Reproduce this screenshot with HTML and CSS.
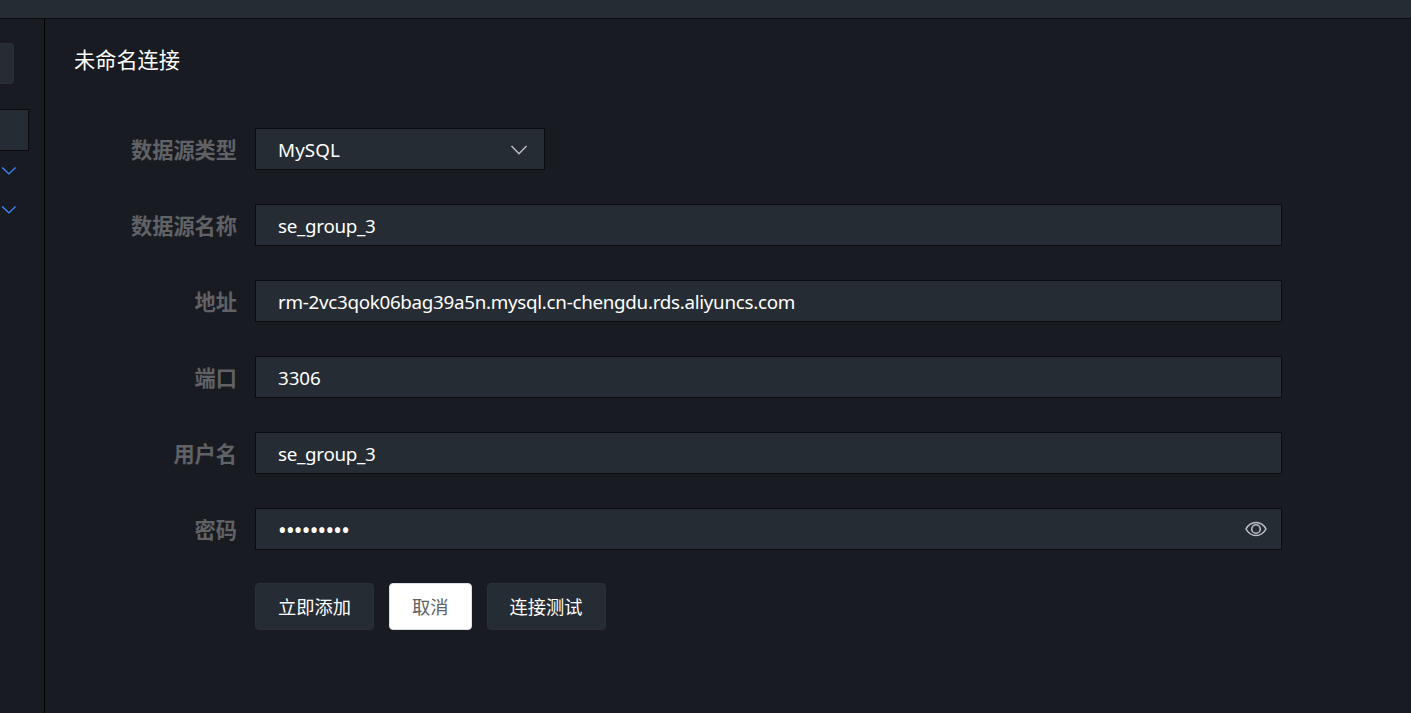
FILE: index.html
```html
<!DOCTYPE html>
<html lang="zh-CN">
<head>
<meta charset="utf-8">
<title>未命名连接</title>
<link rel="stylesheet" href="styles.css">
</head>
<body>
<div class="app">
  <header class="topbar"></header>
  <div class="body">
    <aside class="sidebar">
      <div class="side-button"></div>
      <div class="side-input"></div>
      <svg class="side-arrow" viewBox="0 0 16 10"><path d="M2.200 1.500 8.900 7.900 15.600 1.500"/></svg>
      <svg class="side-arrow" viewBox="0 0 16 10"><path d="M2.200 1.500 8.900 7.900 15.600 1.500"/></svg>
    </aside>
    <main class="main">
      <h1 class="title">未命名连接</h1>
      <form class="form">
        <div class="row"><label class="label">数据源类型</label>
          <div class="field select"><span class="value mysql">MySQL</span>
            <svg class="arrow" viewBox="0 0 18 12"><path d="M1.5 2 9 9.700 16.5 2"/></svg></div></div>
        <div class="row"><label class="label">数据源名称</label><div class="field"><span class="value">se_group_3</span></div></div>
        <div class="row"><label class="label">地址</label><div class="field"><span class="value">rm-2vc3qok06bag39a5n.mysql.cn-chengdu.rds.aliyuncs.com</span></div></div>
        <div class="row"><label class="label">端口</label><div class="field"><span class="value port">3306</span></div></div>
        <div class="row"><label class="label">用户名</label><div class="field"><span class="value">se_group_3</span></div></div>
        <div class="row"><label class="label">密码</label>
          <div class="field"><span class="value password">•••••••••</span>
            <svg class="eye" viewBox="0 0 22 16"><path d="M1 8C5.5-.6 16.5-.6 21 8 16.500 16.600 5.500 16.600 1 8Z"/><circle cx="11" cy="8" r="4.300"/></svg></div></div>
        <div class="actions">
          <button type="button" class="button">立即添加</button>
          <button type="button" class="button plain">取消</button>
          <button type="button" class="button">连接测试</button>
        </div>
      </form>
    </main>
  </div>
</div>
</body>
</html>
```
FILE: styles.css
```css
* { box-sizing: border-box; }
body {
  margin: 0;
  background: #181c22;
  color: #fff;
  font-family: "Noto Sans", "Noto Sans CJK SC", sans-serif;
}
.app { height: 713px; display: flex; flex-direction: column; overflow: hidden; }
.topbar { height: 19px; flex: none; background: #262c33; border-bottom: 1px solid #0a0c0f; }
.body { flex: 1; display: flex; }
.sidebar { width: 45px; flex: none; border-right: 1px solid #000; padding-top: 24px; }
.side-button {
  width: 14px; height: 41px;
  background: #262c33;
  border: 1px solid #2c3036; border-left: 0;
  border-radius: 0 4px 4px 0;
}
.side-input {
  width: 29px; height: 42px; margin-top: 25px;
  background: #262c33;
  border: 1px solid #0a0c0f; border-left: 0;
}
.side-arrow { display: block; width: 16px; height: 10px; margin: 15px 0 29px; fill: none; stroke: #3a8bff; stroke-width: 1.4; }
.main { flex: 1; padding: 25px 129px 0 29px; }
.title { margin: 0; font-family: "Noto Sans CJK SC", sans-serif; font-size: 21.2px; font-weight: 400; line-height: 30px; }
.form { margin-top: 54px; }
.row { display: flex; height: 42px; margin-bottom: 34px; }
.label {
  width: 181px; padding-right: 18px; flex: none;
  text-align: right; white-space: nowrap;
  font-family: "Noto Sans CJK SC", sans-serif;
  font-size: 21.2px; font-weight: 700; line-height: 42px;
  color: #606266;
}
.field {
  flex: 1; display: flex; align-items: center; justify-content: space-between;
  padding: 1px 14px 0 22px;
  background: #262c33;
  border: 1px solid #0a0c0f;
}
.select { flex: none; width: 290px; padding-right: 16px; }
.value { font-size: 18.8px; line-height: 38px; white-space: nowrap; letter-spacing: -0.29px; }
.mysql { letter-spacing: 0.1px; }
.port { letter-spacing: -0.1px; }
.password { font-size: 23px; letter-spacing: -0.74px; }
.arrow { width: 18px; height: 12px; fill: none; stroke: #b9bdc5; stroke-width: 1.5; }
.eye { width: 22px; height: 16px; margin-bottom: 1px; fill: none; stroke: #b9bdc5; stroke-width: 1.6; }
.actions { display: flex; gap: 15px; padding-left: 181px; margin-top: -1px; }
.button {
  height: 47px; padding: 0 22px 1px;
  border: 1px solid #2c3036; border-radius: 4px;
  background: #262c33; color: #fff;
  font: 400 18.25px/43px "Noto Sans CJK SC", sans-serif;
}
.plain { background: #fff; border-color: #dcdfe6; color: #606266; }
```
